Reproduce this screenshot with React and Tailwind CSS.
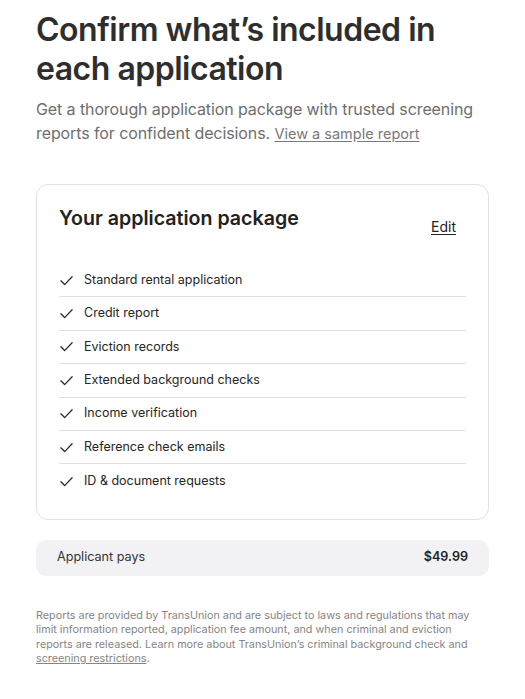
import React from "react";

const items = [
  "Standard rental application",
  "Credit report",
  "Eviction records",
  "Extended background checks",
  "Income verification",
  "Reference check emails",
  "ID & document requests",
];

function Check() {
  return (
    <svg width="15" height="15" viewBox="0 0 24 24" fill="none" stroke="#2a2a2a" strokeWidth="2" strokeLinecap="round" strokeLinejoin="round">
      <path d="M3 12.5l6 6L21 6" />
    </svg>
  );
}

export default function App() {
  return (
    <div className="bg-white min-h-[699px] px-[36px] pt-[10px] text-[#2b2b2b]" style={{ fontFamily: "Inter, 'Noto Sans', sans-serif" }}>
      <h1 className="text-[32px] leading-[39px] font-semibold tracking-[-0.5px] text-[#2e2e2e]">
        Confirm what’s included in each application
      </h1>
      <p className="mt-[9px] text-[16px] leading-[24px] tracking-[-0.1px] text-[#6e6e6e]">
        Get a thorough application package with trusted screening reports for confident decisions.{" "}
        <a className="underline text-[14.5px] leading-[20px] tracking-normal text-[#7a7a7a] underline-offset-2">View a sample report</a>
      </p>

      <div className="mt-[39px] border border-[#e2e2e2] rounded-[12px] px-[22px] pt-[19px] pb-[21px]">
        <div className="flex justify-between items-start">
          <h2 className="text-[19.6px] leading-[28px] font-semibold text-[#222]">Your application package</h2>
          <a className="mt-[13px] mr-[10px] text-[14px] leading-[20px] underline underline-offset-2 text-[#222]">Edit</a>
        </div>
        <ul className="mt-[27px]">
          {items.map((t, i) => (
            <li
              key={t}
              className={`flex items-center gap-[10px] h-[33.4px] text-[12.5px] text-[#262626] ${i < items.length - 1 ? "border-b border-[#e0e0e0]" : ""}`}
            >
              <Check />
              <span>{t}</span>
            </li>
          ))}
        </ul>
      </div>

      <div className="mt-[20px] h-[36px] bg-[#f2f2f5] rounded-[10px] flex items-center justify-between px-[21px] text-[12.6px]">
        <span className="text-[#333]">Applicant pays</span>
        <span className="font-semibold text-[#222]">$49.99</span>
      </div>

      <p className="mt-[33px] text-[10.8px] leading-[14.5px] text-[#858585]">
        Reports are provided by TransUnion and are subject to laws and regulations that may limit information reported, application fee amount, and when criminal and eviction reports are released. Learn more about TransUnion’s criminal background check and{" "}
        <a className="underline">screening restrictions</a>.
      </p>
    </div>
  );
}
